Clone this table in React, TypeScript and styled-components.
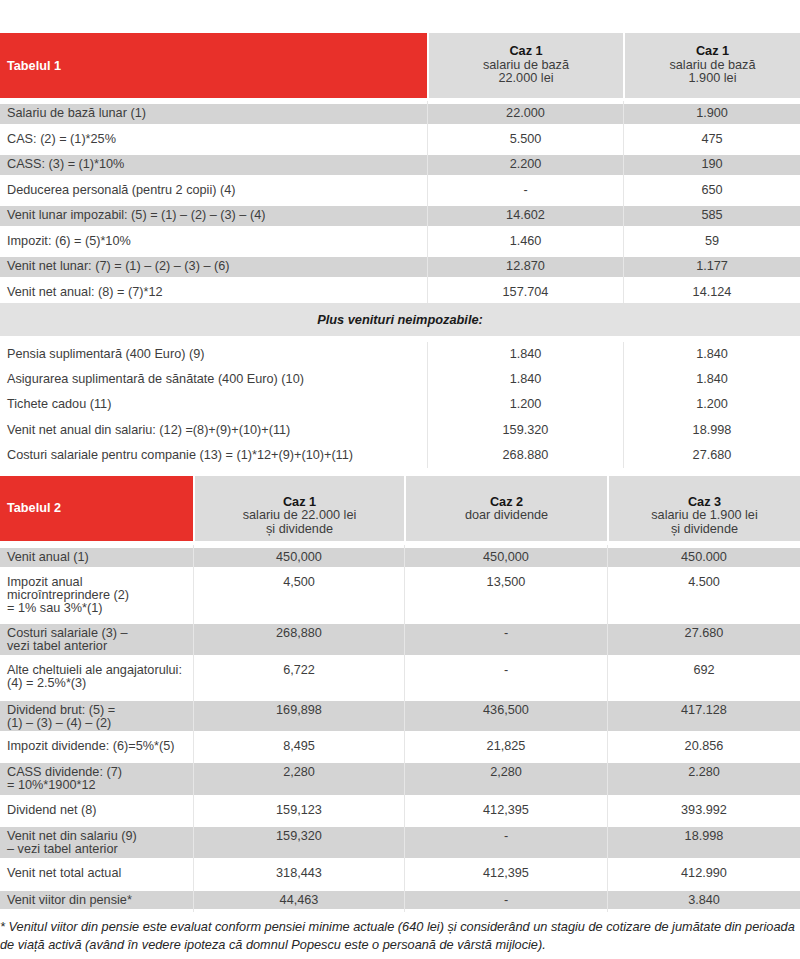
import React from "react";
import styled, { createGlobalStyle } from "styled-components";

const Global = createGlobalStyle`
  html, body { margin: 0; padding: 0; background: #ffffff; }
  body {
    font-family: "Liberation Sans", Arial, sans-serif;
    color: #3d3d3d;
    -webkit-font-smoothing: antialiased;
  }
`;

const RED = "#e8302a";
const HEAD_GRAY = "#dcdcdc";
const ROW_GRAY = "#d4d4d4";
const PLUS_GRAY = "#e2e2e2";
const DIVIDER = "#e6e6e6";
const FONT_SIZE = "12.7px";

const Page = styled.main`
  width: 800px;
  padding-top: 33px;
  overflow: hidden;
`;

const Table = styled.section<{ $gap?: number }>`
  display: flex;
  flex-direction: column;
  margin-top: ${(p) => p.$gap ?? 0}px;
`;

const HeaderRow = styled.div<{ $cols: string; $after: number }>`
  display: grid;
  grid-template-columns: ${(p) => p.$cols};
  column-gap: 2px;
  height: 65px;
  margin-bottom: ${(p) => p.$after}px;
`;

const TitleCell = styled.div`
  background: ${RED};
  color: #ffffff;
  font-weight: 700;
  font-size: ${FONT_SIZE};
  display: flex;
  align-items: center;
  padding-left: 7px;
`;

const CaseCell = styled.div<{ $top?: boolean }>`
  background: ${HEAD_GRAY};
  display: flex;
  flex-direction: column;
  align-items: center;
  justify-content: ${(p) => (p.$top ? "flex-start" : "center")};
  padding-top: ${(p) => (p.$top ? "20px" : "0")};
  font-size: ${FONT_SIZE};
  line-height: 13.5px;
  color: #3d3d3d;
  text-align: center;
`;

const CaseTitle = styled.span`
  font-weight: 700;
  color: #151515;
`;

const BodyRow = styled.div<{ $cols: string }>`
  display: grid;
  grid-template-columns: ${(p) => p.$cols};
`;

const Cell = styled.div<{ $divider?: boolean }>`
  padding: 3px 0;
  border-left: ${(p) => (p.$divider ? `1px solid ${DIVIDER}` : "none")};
`;

const Fill = styled.div<{ $gray: boolean; $h: number; $center?: boolean }>`
  background: ${(p) => (p.$gray ? ROW_GRAY : "transparent")};
  height: ${(p) => p.$h}px;
  box-sizing: border-box;
  padding: 3px ${(p) => (p.$center ? "0" : "7px")} 0;
  font-size: ${FONT_SIZE};
  line-height: 13px;
  white-space: nowrap;
  text-align: ${(p) => (p.$center ? "center" : "left")};
`;

const Line = styled.div``;

const PlusRow = styled.div`
  background: ${PLUS_GRAY};
  height: 33px;
  margin: -2px 0 6px;
  display: flex;
  align-items: center;
  justify-content: center;
  font-size: 12.8px;
  font-weight: 700;
  font-style: italic;
  color: #1a1a1a;
`;

const Footnote = styled.p`
  margin: 6px 0 0;
  font-size: 12.75px;
  line-height: 18px;
  font-style: italic;
  color: #262626;
  white-space: nowrap;
`;

type Row = { label: string[]; values: string[]; gray: boolean; h: number };

const T1_COLS = "427px 196px 1fr";
const T1_HEAD_COLS = "427px 194px 1fr";

const t1Top: Row[] = [
  { label: ["Salariu de bază lunar (1)"], values: ["22.000", "1.900"], gray: true, h: 19.5 },
  { label: ["CAS: (2) = (1)*25%"], values: ["5.500", "475"], gray: false, h: 19.5 },
  { label: ["CASS: (3) = (1)*10%"], values: ["2.200", "190"], gray: true, h: 19.5 },
  { label: ["Deducerea personală (pentru 2 copii) (4)"], values: ["-", "650"], gray: false, h: 19.5 },
  { label: ["Venit lunar impozabil: (5) = (1) – (2) – (3) – (4)"], values: ["14.602", "585"], gray: true, h: 19.5 },
  { label: ["Impozit: (6) = (5)*10%"], values: ["1.460", "59"], gray: false, h: 19.5 },
  { label: ["Venit net lunar: (7) = (1) – (2) – (3) – (6)"], values: ["12.870", "1.177"], gray: true, h: 19.5 },
  { label: ["Venit net anual: (8) = (7)*12"], values: ["157.704", "14.124"], gray: false, h: 19.5 },
];

const t1Bottom: Row[] = [
  { label: ["Pensia suplimentară (400 Euro) (9)"], values: ["1.840", "1.840"], gray: false, h: 19.2 },
  { label: ["Asigurarea suplimentară de sănătate (400 Euro) (10)"], values: ["1.840", "1.840"], gray: false, h: 19.2 },
  { label: ["Tichete cadou (11)"], values: ["1.200", "1.200"], gray: false, h: 19.2 },
  { label: ["Venit net anual din salariu: (12) =(8)+(9)+(10)+(11)"], values: ["159.320", "18.998"], gray: false, h: 19.2 },
  { label: ["Costuri salariale pentru companie (13) = (1)*12+(9)+(10)+(11)"], values: ["268.880", "27.680"], gray: false, h: 19.2 },
];

const T2_COLS = "193px 211px 203px 1fr";
const T2_HEAD_COLS = "193px 209px 201px 1fr";

const t2Rows: Row[] = [
  { label: ["Venit anual (1)"], values: ["450,000", "450,000", "450.000"], gray: true, h: 19 },
  { label: ["Impozit anual", "microîntreprindere (2)", "= 1% sau 3%*(1)"], values: ["4,500", "13,500", "4.500"], gray: false, h: 45 },
  { label: ["Costuri salariale (3) –", "vezi tabel anterior"], values: ["268,880", "-", "27.680"], gray: true, h: 31 },
  { label: ["Alte cheltuieli ale angajatorului:", "(4) = 2.5%*(3)"], values: ["6,722", "-", "692"], gray: false, h: 34 },
  { label: ["Dividend brut: (5) =", "(1) – (3) – (4) – (2)"], values: ["169,898", "436,500", "417.128"], gray: true, h: 30 },
  { label: ["Impozit dividende: (6)=5%*(5)"], values: ["8,495", "21,825", "20.856"], gray: false, h: 20 },
  { label: ["CASS dividende: (7)", "= 10%*1900*12"], values: ["2,280", "2,280", "2.280"], gray: true, h: 32 },
  { label: ["Dividend net (8)"], values: ["159,123", "412,395", "393.992"], gray: false, h: 20 },
  { label: ["Venit net din salariu (9)", "– vezi tabel anterior"], values: ["159,320", "-", "18.998"], gray: true, h: 31 },
  { label: ["Venit net total actual"], values: ["318,443", "412,395", "412.990"], gray: false, h: 21 },
  { label: ["Venit viitor din pensie*"], values: ["44,463", "-", "3.840"], gray: true, h: 18 },
];

const DataRow: React.FC<{ row: Row; cols: string }> = ({ row, cols }) => (
  <BodyRow $cols={cols}>
    <Cell>
      <Fill $gray={row.gray} $h={row.h}>
        {row.label.map((l, i) => (
          <Line key={i}>{l}</Line>
        ))}
      </Fill>
    </Cell>
    {row.values.map((v, i) => (
      <Cell key={i} $divider>
        <Fill $gray={row.gray} $h={row.h} $center>
          {v}
        </Fill>
      </Cell>
    ))}
  </BodyRow>
);

export default function App() {
  return (
    <>
      <Global />
      <Page>
        <Table>
          <HeaderRow $cols={T1_HEAD_COLS} $after={3}>
            <TitleCell>Tabelul 1</TitleCell>
            <CaseCell>
              <CaseTitle>Caz 1</CaseTitle>
              <span>salariu de bază</span>
              <span>22.000 lei</span>
            </CaseCell>
            <CaseCell>
              <CaseTitle>Caz 1</CaseTitle>
              <span>salariu de bază</span>
              <span>1.900 lei</span>
            </CaseCell>
          </HeaderRow>
          {t1Top.map((r, i) => (
            <DataRow key={i} row={r} cols={T1_COLS} />
          ))}
          <PlusRow>Plus venituri neimpozabile:</PlusRow>
          {t1Bottom.map((r, i) => (
            <DataRow key={i} row={r} cols={T1_COLS} />
          ))}
        </Table>

        <Table $gap={8}>
          <HeaderRow $cols={T2_HEAD_COLS} $after={4}>
            <TitleCell>Tabelul 2</TitleCell>
            <CaseCell $top>
              <CaseTitle>Caz 1</CaseTitle>
              <span>salariu de 22.000 lei</span>
              <span>și dividende</span>
            </CaseCell>
            <CaseCell $top>
              <CaseTitle>Caz 2</CaseTitle>
              <span>doar dividende</span>
            </CaseCell>
            <CaseCell $top>
              <CaseTitle>Caz 3</CaseTitle>
              <span>salariu de 1.900 lei</span>
              <span>și dividende</span>
            </CaseCell>
          </HeaderRow>
          {t2Rows.map((r, i) => (
            <DataRow key={i} row={r} cols={T2_COLS} />
          ))}
        </Table>

        <Footnote>
          * Venitul viitor din pensie este evaluat conform pensiei minime actuale (640 lei) și considerând un stagiu de
          cotizare de jumătate din perioada
          <br />
          de viață activă (având în vedere ipoteza că domnul Popescu este o persoană de vârstă mijlocie).
        </Footnote>
      </Page>
    </>
  );
}
